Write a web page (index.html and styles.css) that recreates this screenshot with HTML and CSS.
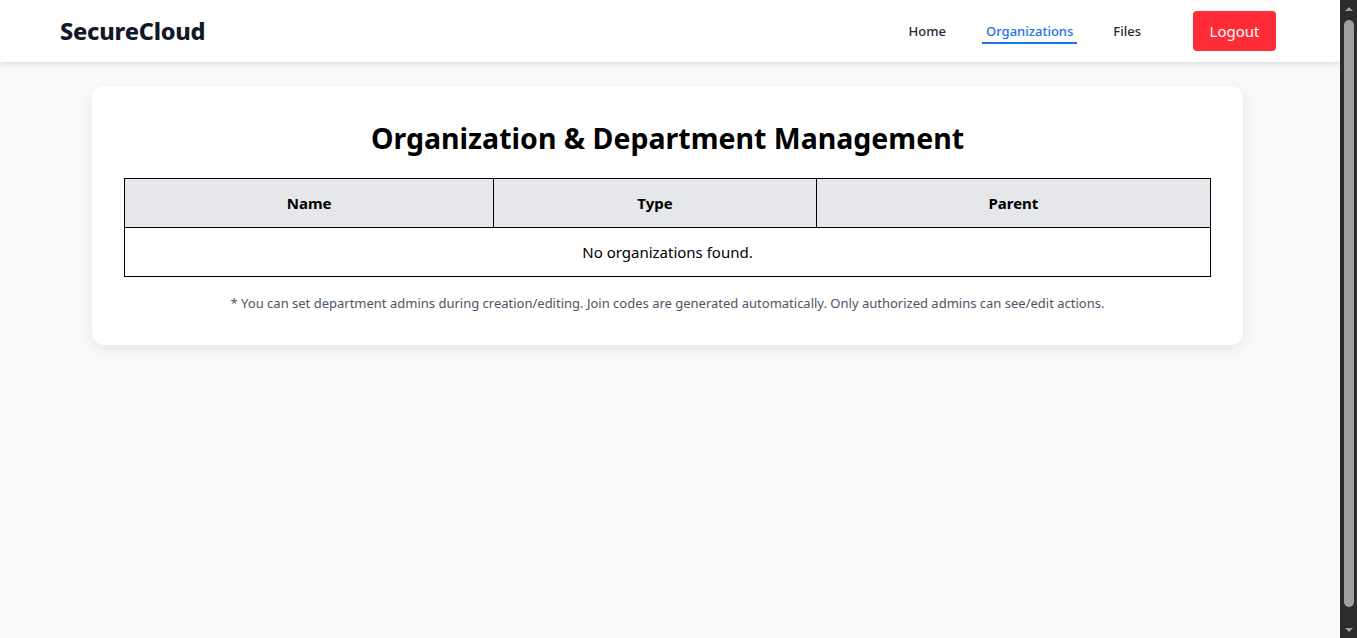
FILE: index.html
```html
<!DOCTYPE html>
<html lang="en">
<head>
<meta charset="utf-8">
<title>SecureCloud - Organizations</title>
<link rel="stylesheet" href="styles.css">
</head>
<body>
<div class="window">
  <div class="app">
    <header class="navbar">
      <div class="brand">SecureCloud</div>
      <nav class="nav">
        <a class="nav-link" href="#">Home</a>
        <a class="nav-link active" href="#">Organizations</a>
        <a class="nav-link" href="#">Files</a>
        <button class="logout" type="button">Logout</button>
      </nav>
    </header>
    <main class="main">
      <section class="card">
        <h1 class="title">Organization &amp; Department Management</h1>
        <table class="org-table">
          <colgroup>
            <col class="col-name">
            <col class="col-type">
            <col class="col-parent">
          </colgroup>
          <thead>
            <tr><th>Name</th><th>Type</th><th>Parent</th></tr>
          </thead>
          <tbody>
            <tr><td colspan="3">No organizations found.</td></tr>
          </tbody>
        </table>
        <p class="note">* You can set department admins during creation/editing. Join codes are generated automatically. Only authorized admins can see/edit actions.</p>
      </section>
    </main>
  </div>
  <div class="scrollbar" aria-hidden="true">
    <div class="sb-arrow sb-up"></div>
    <div class="sb-track"><div class="sb-thumb"></div></div>
    <div class="sb-arrow sb-down"></div>
  </div>
</div>
</body>
</html>
```
FILE: styles.css
```css
html, body {
  margin: 0;
  height: 100%;
}
body {
  font-family: "Noto Sans", "Open Sans", "Liberation Sans", sans-serif;
  background: #f8f9fa;
  color: #000;
  overflow: hidden;
}
.window {
  display: flex;
  height: 100vh;
}
.app {
  flex: 1;
  min-width: 0;
  overflow: hidden;
}
.scrollbar {
  width: 17px;
  flex: none;
  background: #2c2c2c;
  display: flex;
  flex-direction: column;
  align-items: center;
}
.sb-arrow {
  height: 17px;
  width: 17px;
  display: flex;
  align-items: center;
  justify-content: center;
  flex: none;
}
.sb-up::before,
.sb-down::before {
  content: "";
  width: 0;
  height: 0;
  border-left: 4px solid transparent;
  border-right: 4px solid transparent;
}
.sb-up::before {
  border-bottom: 4px solid #9f9f9f;
}
.sb-down::before {
  border-top: 4px solid #9f9f9f;
}
.sb-track {
  flex: 1;
  width: 100%;
  display: flex;
  justify-content: center;
  padding: 3px 0 14px;
  box-sizing: border-box;
}
.sb-thumb {
  width: 10px;
  flex: none;
  background: #9f9f9f;
  border-radius: 5px;
}
.navbar {
  height: 62px;
  background: #fff;
  box-shadow: 0 2px 6px rgba(0, 0, 0, 0.12);
  display: flex;
  align-items: center;
  justify-content: space-between;
  padding: 0 64px 0 60px;
  box-sizing: border-box;
  position: relative;
}
.brand {
  font-size: 23.5px;
  font-weight: 800;
  color: #111827;
  letter-spacing: -0.2px;
}
.nav {
  display: flex;
  align-items: center;
}
.nav-link {
  font-size: 13px;
  font-weight: 500;
  color: #1f2937;
  text-decoration: none;
  padding: 0 4px 2px;
  margin: 3px 0 0 32px;
  border-bottom: 2px solid transparent;
}
.nav-link:first-child {
  margin-left: 0;
}
.nav-link.active {
  color: #1a73e8;
  border-bottom-color: #1a73e8;
}
.logout {
  margin-left: 48px;
  height: 40px;
  width: 83px;
  background: #ff2b37;
  color: #fff;
  border: none;
  border-radius: 4px;
  font-family: inherit;
  font-size: 15px;
}
.main {
  padding: 24px 5px 24px 0;
}
.card {
  max-width: 1151px;
  margin: 0 auto;
  background: #fff;
  border-radius: 12px;
  box-shadow: 0 4px 14px rgba(0, 0, 0, 0.08);
  padding: 32px;
  box-sizing: border-box;
}
.title {
  margin: 0 0 20px;
  text-align: center;
  font-size: 28.5px;
  line-height: 40px;
  font-weight: 700;
}
.org-table {
  width: 100%;
  border-collapse: collapse;
}
.col-name { width: 34%; }
.col-type { width: 29.7%; }
.col-parent { width: 36.3%; }
.org-table th,
.org-table td {
  border: 1px solid #000;
  height: 49px;
  padding: 0 12px;
  text-align: center;
  box-sizing: border-box;
}
.org-table th {
  background: #e5e7eb;
  font-size: 15px;
  font-weight: 700;
}
.org-table td {
  font-size: 15px;
}
.note {
  margin: 16px 0 0;
  text-align: center;
  font-size: 13px;
  line-height: 20px;
  color: #4b5563;
}
```
